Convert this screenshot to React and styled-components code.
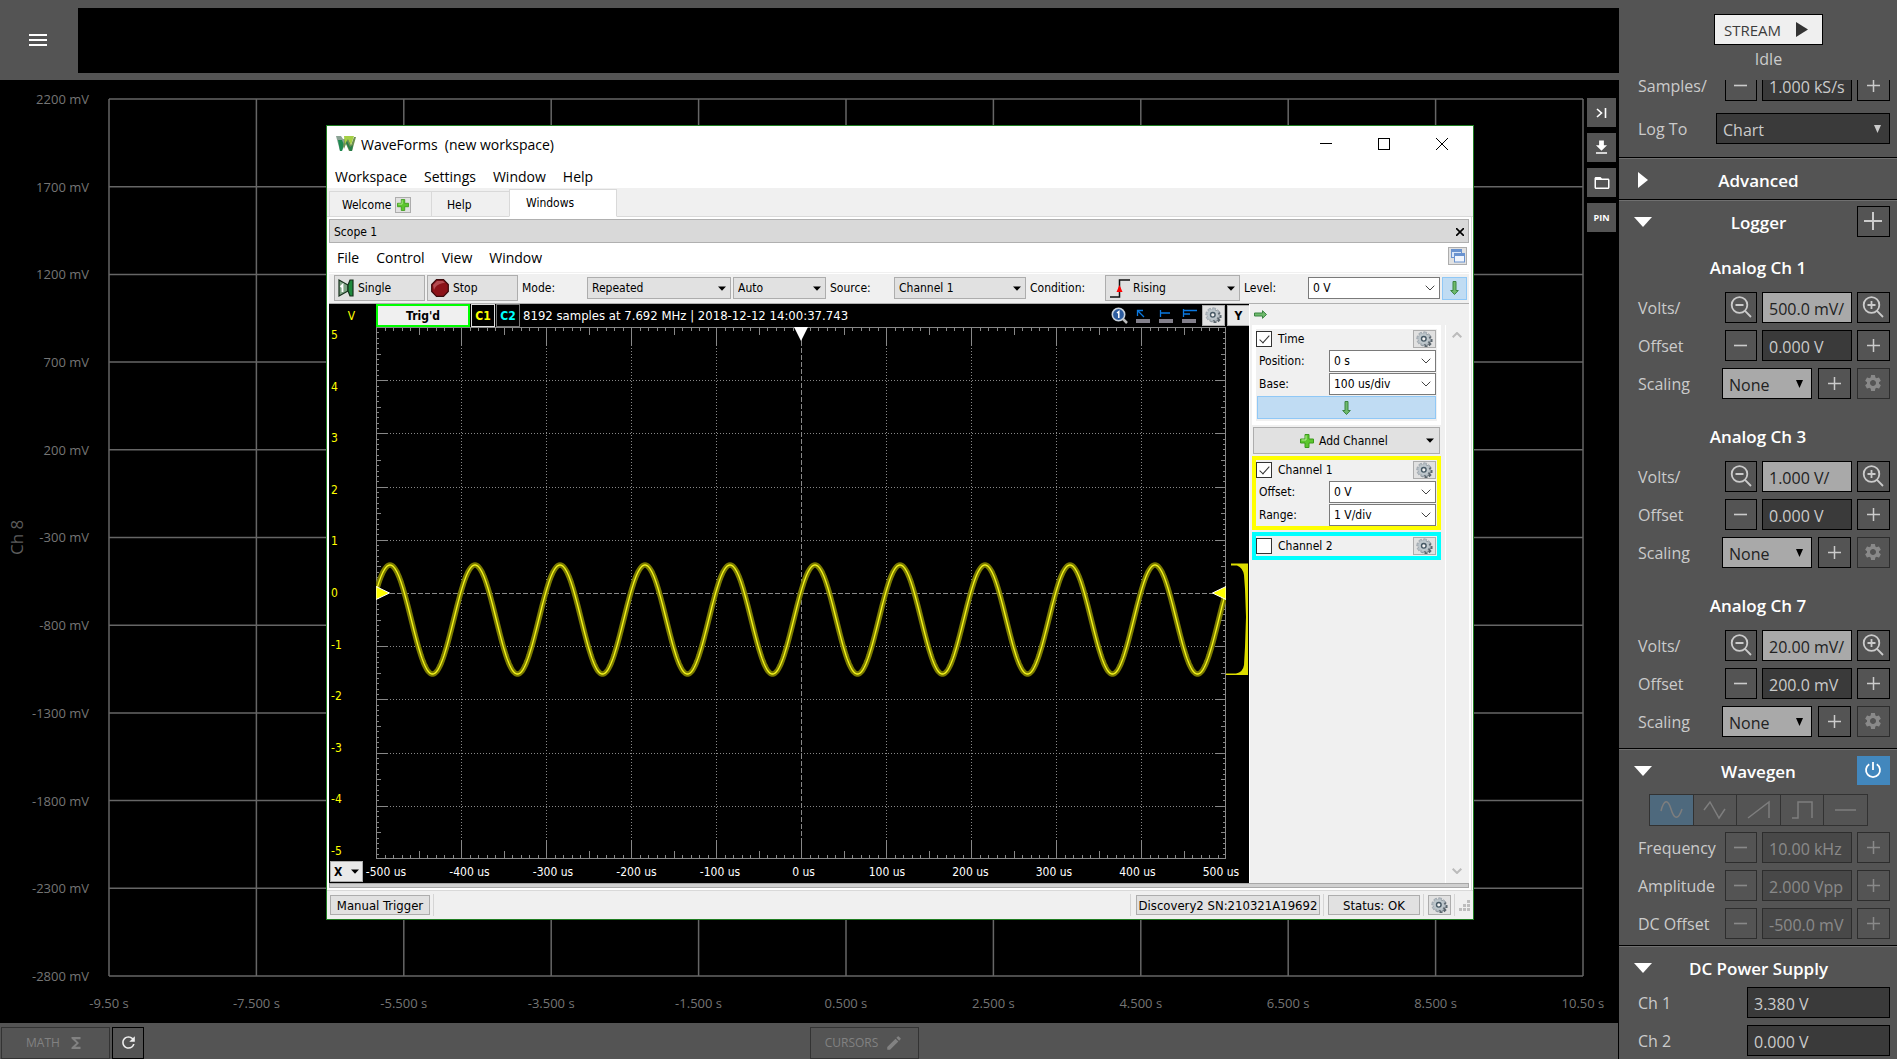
import React from "react";
import styled, { createGlobalStyle, css } from "styled-components";
import { MdMenu, MdFileDownload, MdFolderOpen, MdSettings, MdRefresh, MdEdit, MdFunctions } from "react-icons/md";

const ui = '"Open Sans", "Noto Sans", sans-serif';
const tahoma = '"DejaVu Sans Condensed", "DejaVu Sans", sans-serif';

const Global = createGlobalStyle`
  *, *::before, *::after { box-sizing: border-box; }
  body { margin: 0; background: #000; overflow: hidden; }
  button, input, select { font: inherit; color: inherit; margin: 0; }
  svg { display: block; flex: none; }
`;

/* ---------- Application frame ---------- */

const Shell = styled.div`
  display: grid;
  grid-template-columns: minmax(0, 1fr) 278px;
  height: 100vh;
  font-family: ${ui};
  font-size: 16px;
  color: #cbcbcb;
  background: #000;
`;

const Main = styled.main`
  display: flex;
  flex-direction: column;
  min-width: 0;
`;

const TopBar = styled.header`
  display: flex;
  height: 80px;
  flex: none;
  padding: 8px 0 7px;
  background: #545454;
`;

const MenuButton = styled.button`
  width: 78px;
  padding: 0 0 2px 26px;
  border: 0;
  background: none;
  color: #fff;
`;

const Timeline = styled.div`
  flex: 1;
  background: #000;
`;

const ChartArea = styled.section`
  position: relative;
  flex: 1;
  min-height: 0;
  display: grid;
  grid-template-columns: 32px 57px minmax(0, 1fr) 36px;
  grid-template-rows: minmax(0, 1fr) 47px;
  padding-top: 19px;
  font-size: 13px;
  color: #757575;
`;

const ChannelName = styled.div`
  display: flex;
  align-items: center;
  justify-content: center;
  writing-mode: vertical-rl;
  transform: rotate(180deg);
  font-size: 17px;
  color: #5c5c5c;
`;

const YLabels = styled.div`
  display: flex;
  flex-direction: column;
  justify-content: space-between;
  text-align: right;
  line-height: 18px;
  margin: -9px 0;
  white-space: nowrap;
`;

const PlotCell = styled.div`
  margin-left: 20px;
  min-height: 0;
`;

const XLabels = styled.div`
  grid-column: 3;
  display: flex;
  justify-content: space-between;
  margin-left: 20px;
  padding-top: 18px;
  line-height: 18px;
`;

const XLabel = styled.span`
  display: flex;
  justify-content: center;
  width: 0;
  white-space: pre;
`;

const Tools = styled.div`
  grid-column: 4;
  grid-row: 1;
  display: flex;
  flex-direction: column;
  align-items: flex-start;
  gap: 6px;
  padding-left: 4px;
  margin-top: -1px;
`;

const ToolButton = styled.button`
  width: 29px;
  height: 29px;
  padding: 0;
  border: 0;
  display: flex;
  align-items: center;
  justify-content: center;
  background: #545454;
  color: #fff;
  font-size: 9px;
  font-weight: 700;
`;

const BottomBar = styled.footer`
  display: grid;
  grid-template-columns: 1fr 1fr;
  align-items: center;
  height: 36px;
  flex: none;
  padding: 3px 0 0 1px;
  background: #545454;
  border-right: 1px solid #000;
`;

const ButtonPair = styled.div`
  display: flex;
  gap: 2px;
`;

const BarButton = styled.button`
  display: flex;
  align-items: center;
  justify-content: center;
  gap: 7px;
  width: ${(p) => p.$w || 109}px;
  height: 32px;
  padding: 0;
  border: 1px solid ${(p) => (p.disabled ? "#333" : "#000")};
  background: none;
  font-size: 12px;
  color: ${(p) => (p.disabled ? "#828282" : "#eee")};
`;

/* ---------- Sidebar ---------- */

const Side = styled.aside`
  display: flex;
  flex-direction: column;
  min-height: 0;
  background: #545454;
`;

const RunBox = styled.div`
  display: flex;
  flex-direction: column;
  align-items: center;
  height: 80px;
  flex: none;
  padding: 14px 0 0 21px;
  line-height: 28px;
`;

const StreamButton = styled.button`
  display: flex;
  align-items: center;
  justify-content: space-between;
  width: 109px;
  height: 31px;
  flex: none;
  padding: 0 14px 0 9px;
  border: 1px solid #000;
  background: #efefef;
  color: #3c3c3c;
  font-size: 15px;
`;

const SideScroll = styled.div`
  flex: 1;
  min-height: 0;
  overflow: hidden;
`;

const Section = styled.section`
  border-top: 1px solid #000;
  box-shadow: inset 0 1px #707070;
  padding: 1px 7px ${(p) => p.$pb || 0}px 19px;
`;

const TopSection = styled.section`
  display: flex;
  flex-direction: column;
  gap: 12px;
  margin-top: -10px;
  padding: 0 7px 13px 19px;
`;

const SectionHead = styled.div`
  display: grid;
  grid-template-columns: 33px 1fr 33px;
  align-items: center;
  height: 40px;
  margin-left: -4px;
  h2 {
    margin: 0;
    padding: 2px 7px 0 0;
    text-align: center;
    font-size: 17px;
    font-weight: 600;
    color: #fff;
  }
`;

const Toggle = styled.button`
  width: 20px;
  height: 24px;
  padding: 1px 0 0;
  border: 0;
  background: none;
  color: #fff;
`;

const Channel = styled.div`
  h3 {
    margin: 0 0 12px;
    padding-right: 12px;
    line-height: 24px;
    text-align: center;
    font-size: 17px;
    font-weight: 600;
    color: #fff;
  }
  padding-top: ${(p) => (p.$first ? 15 : 26)}px;
`;

const Rows = styled.div`
  display: flex;
  flex-direction: column;
  gap: 7px;
`;

const Row = styled.div`
  display: grid;
  grid-template-columns: ${(p) => p.$cols || "1fr 32px 90px 33px"};
  column-gap: ${(p) => p.$gap || 5}px;
  align-items: center;
  height: 31px;
  white-space: nowrap;
`;

const dim = css`
  &:disabled { opacity: 0.45; }
`;

const SideButton = styled.button`
  display: flex;
  align-items: center;
  justify-content: center;
  height: ${(p) => (p.$on ? 29 : 31)}px;
  padding: 0 1px 1px 0;
  border: ${(p) => (p.$on ? "0" : "1px solid #000")};
  background: ${(p) => (p.$on ? "#4287bd" : "none")};
  color: ${(p) => (p.$on ? "#fff" : "#cbcbcb")};
  ${dim}
`;

const Field = styled.input`
  width: 100%;
  min-width: 0;
  height: 31px;
  padding: 2px 0 0 6px;
  border: 1px solid #000;
  border-radius: 0;
  background: ${(p) => (p.$light ? "#a9a9a9" : "#3a3a3a")};
  color: ${(p) => (p.$light ? "#222" : "#cbcbcb")};
  outline: 0;
  ${dim}
`;

const SelectBox = styled.span`
  display: grid;
  align-items: center;
  select, svg { grid-area: 1 / 1; }
  svg { justify-self: end; margin-right: 9px; pointer-events: none; }
`;

const SideSelect = styled.select`
  appearance: none;
  width: 100%;
  height: 31px;
  padding: 2px 0 0 6px;
  border: 1px solid #000;
  border-radius: 0;
  background: ${(p) => (p.$light ? "#a9a9a9" : "#3a3a3a")};
  color: ${(p) => (p.$light ? "#222" : "#cbcbcb")};
`;

const WaveGroup = styled.div`
  display: flex;
  width: 219px;
  margin: 4px 0 6px 11px;
  opacity: 0.5;
`;

const WaveButton = styled.button`
  display: flex;
  align-items: center;
  justify-content: center;
  flex: 1;
  height: 32px;
  padding: 0;
  border: 1px solid #111;
  border-left-width: ${(p) => (p.$on ? 1 : 0)}px;
  background: ${(p) => (p.$on ? "#4a7ea6" : "none")};
  color: #a8a8a8;
`;

/* ---------- WaveForms window ---------- */

const Win = styled.section`
  position: absolute;
  left: 326px;
  top: 45px;
  width: 1148px;
  height: 795px;
  display: flex;
  flex-direction: column;
  border: 1px solid #1f7d22;
  background: #fff;
  font-family: ${tahoma};
  font-size: 12px;
  color: #000;
`;

const TitleBar = styled.div`
  display: flex;
  align-items: center;
  height: 38px;
  padding: 0 25px 2px 9px;
  white-space: pre;
  h1 {
    flex: 1;
    margin: 0 0 0 5px;
    font-family: ${ui};
    font-size: 14px;
    font-weight: 400;
  }
`;

const CaptionButtons = styled.div`
  display: flex;
  gap: 46px;
`;

const PlainButton = styled.button`
  padding: 0;
  border: 0;
  background: none;
`;

const MenuBar = styled.nav`
  display: flex;
  align-items: center;
  gap: 17px;
  height: ${(p) => p.$h}px;
  padding: 0 2px 0 8px;
  font-family: ${ui};
  font-size: 14px;
  a { color: #000; text-decoration: none; }
  button { margin: 0 0 3px auto; }
`;

const Tabs = styled.div`
  display: flex;
  align-items: flex-end;
  height: 29px;
  padding-left: 2px;
  background: #f0f0f0;
  box-shadow: inset 0 -1px #d9d9d9;
`;

const Tab = styled.button`
  display: flex;
  align-items: center;
  gap: 4px;
  width: ${(p) => p.$w}px;
  height: ${(p) => (p.$active ? 28 : 26)}px;
  padding: ${(p) => (p.$active ? 0 : 1)}px 0 0 ${(p) => p.$x}px;
  border: 1px solid #d9d9d9;
  border-bottom-color: ${(p) => (p.$active ? "#fff" : "#d9d9d9")};
  border-right-width: ${(p) => (p.$active ? 1 : 0)}px;
  background: ${(p) => (p.$active ? "#fff" : "#f0f0f0")};
`;

const IconTile = styled.span`
  display: flex;
  align-items: center;
  justify-content: center;
  width: 16px;
  height: 16px;
  border: 1px solid #adadad;
  background: #e1e1e1;
`;

const Pane = styled.div`
  flex: 1;
  min-height: 0;
  display: flex;
  flex-direction: column;
  margin-right: 1px;
  padding: 2px 2px 2px 2px;
  border-right: 1px solid #d9d9d9;
`;

const DockTitle = styled.div`
  display: flex;
  align-items: center;
  justify-content: space-between;
  height: 24px;
  flex: none;
  padding: 1px 4px 0;
  border: 1px solid #b0b0b0;
  background: #d9d9d9;
`;

const WinButton = styled.button`
  display: flex;
  align-items: center;
  justify-content: ${(p) => (p.$left ? "flex-start" : "center")};
  gap: 4px;
  width: ${(p) => p.$w}px;
  height: ${(p) => p.$h}px;
  flex: none;
  padding: 0 0 0 ${(p) => (p.$left ? 3 : 0)}px;
  border: 1px solid ${(p) => (p.$blue ? "#90c8f6" : "#adadad")};
  background: ${(p) => (p.$blue ? "#c0dcf3" : "#e1e1e1")};
`;

const ToolBar = styled.div`
  display: flex;
  align-items: center;
  gap: 2px;
  height: 32px;
  flex: none;
  padding: 0 0 0 5px;
  border-top: 1px solid #f0f0f0;
  border-bottom: 1px solid #b0b0b0;
  background: #f0f0f0;
  box-shadow: inset 0 1px #fff;
`;

const ToolLabel = styled.label`
  width: ${(p) => p.$w}px;
  padding-left: 2px;
`;

const WinSelectBox = styled.span`
  display: grid;
  align-items: center;
  width: ${(p) => p.$w}px;
  select, svg { grid-area: 1 / 1; }
  .caret { justify-self: end; margin-right: 5px; pointer-events: none; }
  .lead { justify-self: start; margin-left: 5px; pointer-events: none; }
`;

const WinSelect = styled.select`
  appearance: none;
  width: 100%;
  height: ${(p) => p.$h || 22}px;
  padding: 0 0 0 ${(p) => p.$x || 4}px;
  border: 1px solid ${(p) => (p.$combo ? "#7a7a7a" : "#adadad")};
  border-radius: 0;
  background: ${(p) => (p.$combo ? "#fff" : "#e1e1e1")};
`;

const ScopeBody = styled.div`
  flex: 1;
  min-height: 0;
  display: grid;
  grid-template-columns: minmax(0, 1fr) 220px;
`;

const Scope = styled.div`
  display: grid;
  grid-template-columns: 47px minmax(0, 1fr) 23px;
  grid-template-rows: 23px minmax(0, 1fr) 24px;
  background: #000;
  color: #fff;
`;

const VLabel = styled.div`
  padding-right: 2px;
  text-align: center;
  line-height: 24px;
  color: #ff0;
`;

const ScopeHead = styled.div`
  grid-column: 2 / 4;
  display: flex;
  align-items: center;
  min-width: 0;
  white-space: pre;
`;

const Trig = styled.button`
  width: 94px;
  height: 23px;
  padding: 0;
  border: 2px solid #0f0;
  background: #f0f0f0;
  color: #000;
  font-weight: 700;
`;

const ChannelTag = styled.button`
  width: 24px;
  height: 23px;
  margin-left: 1px;
  padding: 0;
  border: 1px solid ${(p) => (p.$c === "#ff0" ? "#ddd" : "#777")};
  background: #000;
  color: ${(p) => p.$c};
  font-weight: 700;
`;

const SampleInfo = styled.span`
  flex: 1;
  padding-left: 3px;
  font-size: 13px;
`;

const ViewIcons = styled.div`
  display: flex;
  align-items: center;
  gap: 7px;
  padding-right: 5px;
`;

const AxisButton = styled.button`
  width: 22px;
  height: 21px;
  margin-left: 2px;
  padding: 0;
  border: 1px solid #adadad;
  border-right: 0;
  background: #e9e9e9;
  color: #000;
  font-weight: 700;
`;

const ScopeY = styled.div`
  display: flex;
  flex-direction: column;
  justify-content: space-between;
  padding-left: 2px;
  line-height: 16px;
  color: #ff0;
`;

const ScopeFoot = styled.div`
  grid-column: 1 / 4;
  display: flex;
  align-items: center;
  padding: 1px 28px 0 1px;
`;

const XButton = styled.button`
  display: flex;
  align-items: center;
  justify-content: space-between;
  width: 33px;
  height: 21px;
  margin-right: 23px;
  flex: none;
  padding: 0 3px;
  border: 1px solid #adadad;
  background: #e9e9e9;
  color: #000;
  font-weight: 700;
`;

const ScopeX = styled.div`
  flex: 1;
  display: flex;
  justify-content: space-between;
`;

const Panel = styled.div`
  display: flex;
  flex-direction: column;
  border-left: 1px solid #fff;
  background: #f0f0f0;
`;

const PanelTop = styled.div`
  display: flex;
  align-items: center;
  height: 21px;
  padding-left: 4px;
`;

const PanelScroll = styled.div`
  flex: 1;
  display: grid;
  grid-template-columns: 194px 1fr;
  padding-left: 2px;
`;

const PanelList = styled.div`
  display: flex;
  flex-direction: column;
  gap: 2px;
  padding-right: 4px;
  border-right: 1px solid #fff;
`;

const Group = styled.fieldset`
  display: flex;
  flex-direction: column;
  gap: 1px;
  min-width: 0;
  margin: 0;
  padding: 0 1px ${(p) => p.$pb || 0}px 0;
  border: 4px solid ${(p) => p.$c};
`;

const GroupHead = styled.div`
  display: flex;
  align-items: center;
  height: 20px;
  label { flex: 1; padding-left: 6px; }
`;

const Check = styled.input`
  appearance: none;
  width: 16px;
  height: 16px;
  border: 1px solid #333;
  background: #fff;
  display: grid;
  place-items: center;
  &:checked::after {
    content: "";
    width: 5px;
    height: 10px;
    margin-top: -3px;
    border: solid #333;
    border-width: 0 1px 1px 0;
    transform: rotate(42deg);
  }
`;

const GroupRow = styled.div`
  display: grid;
  grid-template-columns: 70px 107px;
  align-items: center;
  padding-left: 3px;
`;

const BlueBar = styled.button`
  display: flex;
  align-items: center;
  justify-content: center;
  height: 23px;
  margin-left: 1px;
  padding: 0;
  border: 1px solid #90c8f6;
  background: #c0dcf3;
`;

const AddChannel = styled.button`
  display: flex;
  align-items: center;
  height: 27px;
  margin: 0 1px;
  padding: 0 5px 0 46px;
  gap: 5px;
  border: 1px solid #adadad;
  background: #e1e1e1;
  span { flex: 1; text-align: left; }
`;

const ScrollTrack = styled.div`
  display: flex;
  flex-direction: column;
  justify-content: space-between;
  align-items: center;
  padding: 7px 2px 9px 0;
`;

const Splitter = styled.div`
  height: 5px;
  flex: none;
  border: 1px solid #a8a8a8;
  background: #d0d0d0;
`;

const StatusBar = styled.footer`
  display: flex;
  align-items: center;
  gap: 5px;
  height: 29px;
  padding: 0 3px 0 3px;
  border-top: 1px solid #d9d9d9;
  background: #f0f0f0;
  font-size: 13px;
`;

const StatusFill = styled.div`
  flex: 1;
  height: 22px;
  margin-left: -2px;
  border: solid #d5d5d5;
  border-width: 0 1px;
`;

const Divider = styled.span`
  width: 1px;
  height: 22px;
  margin: 0 -1px 0 -2px;
  background: #d5d5d5;
`;

/* ---------- Icons ---------- */

const PlusIcon = ({ s = 13, w = 1.5 }) => (
  <svg width={s} height={s} viewBox="0 0 20 20" stroke="currentColor" strokeWidth={(w * 20) / s}><path d="M10 0V20M0 10H20" /></svg>
);
const MinusIcon = () => (
  <svg width="13" height="13" viewBox="0 0 13 13" stroke="currentColor" strokeWidth="1.6"><path d="M0 6.5H13" /></svg>
);
const ZoomIcon = ({ plus }) => (
  <svg width="22" height="22" viewBox="0 0 22 22" fill="none" stroke="currentColor" strokeWidth="1.8">
    <circle cx="9.5" cy="9" r="7.8" /><path d={`M15 14.8L21 21M5.5 9H13.5${plus ? "M9.5 5V13" : ""}`} />
  </svg>
);
const PowerIcon = () => (
  <svg width="18" height="18" viewBox="0 0 18 18" fill="none" stroke="currentColor" strokeWidth="1.8">
    <path d="M5.2 3.2A7 7 0 1 0 12.8 3.2M9 1V9" />
  </svg>
);
const Tri = ({ open }) => (
  <svg width="18" height="18" viewBox="0 0 18 18" fill="currentColor"><path d={open ? "M0 4H18L9 14Z" : "M4 1V17L14 9Z"} /></svg>
);
const SmallTri = ({ c }) => (
  <svg width="7" height="8" viewBox="0 0 7 8" fill={c}><path d="M0 0H7L3.5 8Z" /></svg>
);
const Caret = () => (
  <svg className="caret" width="8" height="5" viewBox="0 0 8 5"><path d="M0 .5H8L4 4.8Z" fill="#000" /></svg>
);
const Chevron = ({ up, c = "#444", w = 1 }) => (
  <svg className="caret" width="10" height="6" viewBox="0 0 10 6" fill="none" stroke={c} strokeWidth={w}><path d={up ? "M.7 5.3L5 1L9.3 5.3" : "M.7 .7L5 5L9.3 .7"} /></svg>
);
const GreenPlus = ({ s = 12 }) => (
  <svg width={s} height={s} viewBox="0 0 14 14">
    <path d="M5 .5H9V5H13.5V9H9V13.5H5V9H.5V5H5Z" fill="#5cc62e" stroke="#3c9a1c" />
    <path d="M6 1.5V6H1.5" fill="none" stroke="#b5ec95" />
  </svg>
);
const GreenArrow = ({ right }) => (
  <svg width={right ? 13 : 9} height={right ? 9 : 14} viewBox={right ? "0 0 13 9" : "0 0 9 14"}>
    <path d={right ? "M.5 3V6H8.5V8.3L12.5 4.5L8.5 .7V3Z" : "M3 .5H6V9.5H8.3L4.5 13.5L.7 9.5H3Z"} fill="#6fba6c" stroke="#3b8442" />
  </svg>
);
const Gear = () => (
  <svg width="17" height="17" viewBox="0 0 17 17">
    <g transform="translate(10 9.5)">
      {[0, 45, 90, 135].map((a) => <rect key={a} x="-1.5" y="-6.5" width="3" height="13" fill="#59646c" transform={`rotate(${a})`} />)}
      <circle r="4.8" fill="#59646c" />
    </g>
    <g transform="translate(7.8 7.8)">
      {[0, 45, 90, 135].map((a) => <rect key={a} x="-1.5" y="-7" width="3" height="14" fill="#b4bdc3" stroke="#87919a" strokeWidth=".5" transform={`rotate(${a + 12})`} />)}
      <circle r="5.2" fill="#bec7cc" />
      <circle r="2.3" fill="#f2f2f2" stroke="#465864" strokeWidth="1.4" />
    </g>
  </svg>
);
const Logo = () => (
  <svg width="20" height="16" viewBox="0 0 20 16">
    <path d="M0 0H5L7 3H10L8 8L6 15H4Z" fill="#8aa394" />
    <path d="M2 4H6L8 9L6 15H4Z" fill="#1d8a51" />
    <path d="M9 1H12L15 9L18 1H20L16 15H13L10 8L8 13L7 10Z" fill="#6d8f52" />
    <path d="M8 0H18L15 9L12 3L9 8Z" fill="#a4cf45" />
    <path d="M10 7L14 15H16L17 9L14 11L11 5Z" fill="#287d49" />
  </svg>
);
const SingleIcon = () => (
  <svg width="16" height="18" viewBox="0 0 16 18" stroke="#16301c" strokeWidth="1.2">
    <path d="M1 1L10 6V12L1 17Z" fill="#7fa486" /><path d="M10 6L12 1H15V17H12L10 12Z" fill="#1f8a3d" />
    <path d="M2.5 8L4.500 6V13" fill="none" stroke="#fff" strokeWidth="1.8" />
  </svg>
);
const StopIcon = () => (
  <svg width="18" height="18" viewBox="0 0 18 18">
    <path d="M5.5 .7H12.5L17.3 5.5V12.5L12.5 17.3H5.5L.7 12.5V5.5Z" fill="#8c1218" stroke="#3a0a0c" strokeWidth="1.2" />
    <path d="M6 2H12L14 4C9 4 5 6 3 11L2 6Z" fill="#c4656a" opacity=".7" />
  </svg>
);
const RisingIcon = () => (
  <svg className="lead" width="20" height="19" viewBox="0 0 20 19"><path d="M0 18H9.5V1H20" fill="none" stroke="#111" strokeWidth="1.5" /><path d="M9.500 6L12.500 13H6.500Z" fill="#f00" /></svg>
);
const WindowsIcon = () => (
  <svg width="14" height="14" viewBox="0 0 14 14" stroke="#6a93cf"><rect x=".5" y=".5" width="10" height="8" fill="#d9e6f8" /><path d="M1 2H10" strokeWidth="2" /><rect x="3.5" y="4.5" width="10" height="8.5" fill="#f0f5fd" /><path d="M4 6H13" strokeWidth="2" /></svg>
);
const LensIcon = () => (
  <svg width="17" height="17" viewBox="0 0 17 17"><path d="M12 12L16 16" stroke="#bbb" strokeWidth="2.5" /><circle cx="7.5" cy="7.500" r="6.2" fill="#2c5c9f" stroke="#c8d2dc" strokeWidth="1.6" /><path d="M6 6L7.8 4.600V11" fill="none" stroke="#fff" strokeWidth="1.5" /></svg>
);
const CursorIcon = ({ d }) => (
  <svg width="16" height="14" viewBox="0 0 16 14"><rect x="1" y="10" width="14" height="4" fill="#83808b" /><path d={d} stroke="#0a78e0" strokeWidth="1.3" fill="none" /></svg>
);
const Grip = () => (
  <svg width="11" height="11" viewBox="0 0 11 11" fill="#bdbdbd"><path d="M8 0h3v3h-3zM4 4h3v3h-3zM8 4h3v3h-3zM0 8h3v3h-3zM4 8h3v3h-3zM8 8h3v3h-3z" /></svg>
);

/* ---------- Charts ---------- */

const range = (n) => Array.from({ length: n }, (_, i) => i);

function LoggerGrid() {
  return (
    <svg width="100%" height="100%" overflow="visible" stroke="#666" strokeWidth="1.5">
      {range(11).map((i) => (
        <React.Fragment key={i}>
          <line x1={`${i * 10}%`} x2={`${i * 10}%`} y1="0" y2="100%" />
          <line y1={`${i * 10}%`} y2={`${i * 10}%`} x1="0" x2="100%" />
        </React.Fragment>
      ))}
    </svg>
  );
}

const W = 850;
const H = 532;

const wave = range(W + 1)
  .map((x) => `${x ? "L" : "M"}${x} ${(292.5 - 54.5 * Math.cos(((x - 14) / 85) * 2 * Math.PI)).toFixed(1)}`)
  .join("");

function ScopePlot() {
  const ticksX = range(101).map((i) => {
    const x = Math.round(i * 8.5) + 0.5;
    const l = i % 10 === 0 ? 18 : i % 5 === 0 ? 8 : 4;
    return `M${x} 0V${l}M${x} ${H}V${H - l}`;
  }).join("");
  const ticksY = range(101).map((i) => {
    const y = Math.round(i * 5.32) + 0.5;
    const l = i % 10 === 0 ? 11 : i % 5 === 0 ? 5 : 3;
    return `M0 ${y}H${l}M${W} ${y}H${W - l}`;
  }).join("");
  const dots = [1, 2, 3, 4, 6, 7, 8, 9]
    .map((i) => `M${i * 85 + 0.5} 18V${H - 18}M11 ${Math.round(i * 53.2) + 0.5}H${W - 11}`)
    .join("");
  return (
    <svg width="100%" height="100%" viewBox={`0 0 ${W} ${H}`} preserveAspectRatio="none" fill="none">
      <g stroke="#888">
        <path d={ticksX} />
        <path d={ticksY} />
        <rect x=".5" y=".5" width={W - 1} height={H - 1} />
        <path strokeDasharray="1 2" d={dots} />
        <path strokeDasharray="5 2" d={`M425.5 0V${H}M0 266.5H${W}`} />
      </g>
      <path d={wave} stroke="#7a7a00" strokeWidth="5.5" />
      <path d={wave} stroke="#f4f41a" strokeWidth="1.3" />
      <path d="M0 259.5L13.5 266L0 272.5Z M850 259.5L836.5 266L850 272.5Z" fill="#ff0" stroke="#fff" />
      <path d="M418 0H432L425 14Z" fill="#fff" />
    </svg>
  );
}

function Histogram() {
  return (
    <svg width="23" height="100%" viewBox="0 0 23 532" preserveAspectRatio="none" fill="#dede00">
      <path d="M5 236.5H22V348H0V346.5H10Q17 345 18 338L19 320L20 290L19 262L18 248Q17 241 11 238.5H5Z" />
    </svg>
  );
}

/* ---------- Composite controls ---------- */

function Stepper({ label, value, light, zoom, disabled }) {
  const id = React.useId();
  return (
    <Row>
      <label htmlFor={id}>{label}</label>
      <SideButton aria-label={`Decrease ${label}`} disabled={disabled}>{zoom ? <ZoomIcon /> : <MinusIcon />}</SideButton>
      <Field id={id} defaultValue={value} $light={light} disabled={disabled} />
      <SideButton aria-label={`Increase ${label}`} disabled={disabled}>{zoom ? <ZoomIcon plus /> : <PlusIcon />}</SideButton>
    </Row>
  );
}

function Scaling() {
  const id = React.useId();
  return (
    <Row $cols="1fr 90px 33px 33px" $gap={6}>
      <label htmlFor={id}>Scaling</label>
      <SelectBox>
        <SideSelect id={id} $light><option>None</option></SideSelect>
        <SmallTri c="#000" />
      </SelectBox>
      <SideButton aria-label="Add scaling"><PlusIcon /></SideButton>
      <SideButton aria-label="Scaling settings" disabled><MdSettings size={20} /></SideButton>
    </Row>
  );
}

function AnalogChannel({ name, volts, offset, first }) {
  return (
    <Channel $first={first}>
      <h3>{name}</h3>
      <Rows>
        <Stepper label="Volts/" value={volts} light zoom />
        <Stepper label="Offset" value={offset} />
        <Scaling />
      </Rows>
    </Channel>
  );
}

function Head({ title, open, children }) {
  return (
    <SectionHead>
      <Toggle aria-label={`Toggle ${title}`}><Tri open={open} /></Toggle>
      <h2>{title}</h2>
      {children}
    </SectionHead>
  );
}

function Drop({ w, h, x, combo, icon, value, label, id }) {
  return (
    <WinSelectBox $w={w}>
      <WinSelect id={id} aria-label={label} $h={h} $x={x} $combo={combo}><option>{value}</option></WinSelect>
      {icon}
      {combo ? <Chevron /> : <Caret />}
    </WinSelectBox>
  );
}

function LabeledDrop({ label, value }) {
  const id = React.useId();
  return (
    <GroupRow>
      <label htmlFor={id}>{label}</label>
      <Drop w={107} id={id} combo value={value} />
    </GroupRow>
  );
}

function GroupTitle({ name, on }) {
  const id = React.useId();
  return (
    <GroupHead>
      <Check type="checkbox" id={id} defaultChecked={on} />
      <label htmlFor={id}>{name}</label>
      <WinButton $w={23} $h={18} aria-label={`${name} settings`}><Gear /></WinButton>
    </GroupHead>
  );
}

const waves = [
  ["Sine", "M1 11C4-1 8-1 11 9S18 21 22 9"],
  ["Triangle", "M1 10L7 2L16 18L22 9"],
  ["Ramp", "M1 18L22 2V18"],
  ["Square", "M1 18H7V2H21V18"],
  ["DC", "M1 10H22"],
];

function WaveFormsWindow() {
  return (
    <Win aria-label="WaveForms">
      <TitleBar>
        <Logo />
        <h1>{"WaveForms  (new workspace)"}</h1>
        <CaptionButtons>
          <PlainButton aria-label="Minimize"><svg width="12" height="12" stroke="#000"><path d="M0 5.5H12" /></svg></PlainButton>
          <PlainButton aria-label="Maximize"><svg width="12" height="12" stroke="#000" fill="none"><rect x=".5" y=".5" width="11" height="11" /></svg></PlainButton>
          <PlainButton aria-label="Close"><svg width="12" height="12" stroke="#000"><path d="M0 0L12 12M12 0L0 12" /></svg></PlainButton>
        </CaptionButtons>
      </TitleBar>
      <MenuBar $h={24}>
        {["Workspace", "Settings", "Window", "Help"].map((t) => <a href="#" key={t}>{t}</a>)}
      </MenuBar>
      <Tabs>
        <Tab $w={102} $x={12}>Welcome<IconTile><GreenPlus /></IconTile></Tab>
        <Tab $w={78} $x={15}>Help</Tab>
        <Tab $w={108} $x={16} $active>Windows</Tab>
      </Tabs>
      <Pane>
        <DockTitle>
          Scope 1
          <PlainButton aria-label="Close scope"><svg width="8" height="8" stroke="#000" strokeWidth="1.6"><path d="M0 0L8 8M8 0L0 8" /></svg></PlainButton>
        </DockTitle>
        <MenuBar $h={29}>
          {["File", "Control", "View", "Window"].map((t) => <a href="#" key={t}>{t}</a>)}
          <WinButton $w={19} $h={18} aria-label="Undock"><WindowsIcon /></WinButton>
        </MenuBar>
        <ToolBar>
          <WinButton $w={91} $h={26} $left><SingleIcon />Single</WinButton>
          <WinButton $w={91} $h={26} $left><StopIcon />Stop</WinButton>
          <ToolLabel $w={65} htmlFor="mode">Mode:</ToolLabel>
          <Drop w={144} id="mode" value="Repeated" />
          <Drop w={93} label="Trigger mode" value="Auto" />
          <ToolLabel $w={64} htmlFor="source">Source:</ToolLabel>
          <Drop w={132} id="source" value="Channel 1" />
          <ToolLabel $w={75} htmlFor="cond">Condition:</ToolLabel>
          <Drop w={135} h={26} x={27} id="cond" value="Rising" icon={<RisingIcon />} />
          <ToolLabel $w={64} htmlFor="level">Level:</ToolLabel>
          <Drop w={132} id="level" combo value="0 V" />
          <WinButton $w={25} $h={23} $blue aria-label="Level options"><GreenArrow /></WinButton>
        </ToolBar>
        <ScopeBody>
          <Scope>
            <VLabel>V</VLabel>
            <ScopeHead>
              <Trig>Trig'd</Trig>
              <ChannelTag $c="#ff0">C1</ChannelTag>
              <ChannelTag $c="#0ff">C2</ChannelTag>
              <SampleInfo>8192 samples at 7.692 MHz | 2018-12-12 14:00:37.743</SampleInfo>
              <ViewIcons>
                <LensIcon />
                <CursorIcon d="M3 2L9 8M2.500 7V1.500H8" />
                <CursorIcon d="M2.500 1V8M2 4H12" />
                <CursorIcon d="M2.500 0V8M2 1.500H16M2 5H9" />
              </ViewIcons>
              <WinButton $w={23} $h={21} aria-label="View settings"><Gear /></WinButton>
              <AxisButton>Y</AxisButton>
            </ScopeHead>
            <ScopeY>{["5", "4", "3", "2", "1", "0", "-1", "-2", "-3", "-4", "-5"].map((t) => <span key={t}>{t}</span>)}</ScopeY>
            <ScopePlot />
            <Histogram />
            <ScopeFoot>
              <XButton aria-label="X axis">X<Caret /></XButton>
              <ScopeX>
                {[-500, -400, -300, -200, -100, 0, 100, 200, 300, 400, 500].map((t) => <XLabel key={t}>{`${t} us`}</XLabel>)}
              </ScopeX>
            </ScopeFoot>
          </Scope>
          <Panel>
            <PanelTop><GreenArrow right /></PanelTop>
            <PanelScroll>
              <PanelList>
                <Group $c="#fff" $pb={2}>
                  <GroupTitle name="Time" on />
                  <LabeledDrop label="Position:" value="0 s" />
                  <LabeledDrop label="Base:" value="100 us/div" />
                  <BlueBar aria-label="Time options"><GreenArrow /></BlueBar>
                </Group>
                <AddChannel><GreenPlus s={14} /><span>Add Channel</span><Caret /></AddChannel>
                <Group $c="#ff0">
                  <GroupTitle name="Channel 1" on />
                  <LabeledDrop label="Offset:" value="0 V" />
                  <LabeledDrop label="Range:" value="1 V/div" />
                </Group>
                <Group $c="#0ff">
                  <GroupTitle name="Channel 2" />
                </Group>
              </PanelList>
              <ScrollTrack><Chevron up c="#bbb" w={2} /><Chevron c="#bbb" w={2} /></ScrollTrack>
            </PanelScroll>
          </Panel>
        </ScopeBody>
        <Splitter />
      </Pane>
      <StatusBar>
        <WinButton $w={100} $h={20}>Manual Trigger</WinButton>
        <StatusFill />
        <WinButton $w={184} $h={20}>Discovery2 SN:210321A19692</WinButton>
        <Divider />
        <WinButton $w={92} $h={20}>Status: OK</WinButton>
        <Divider />
        <WinButton $w={23} $h={20} aria-label="Device settings"><Gear /></WinButton>
        <Divider />
        <Grip />
      </StatusBar>
    </Win>
  );
}

function Sidebar() {
  return (
    <Side>
      <RunBox>
        <StreamButton>STREAM<svg width="12" height="15" viewBox="0 0 12 15" fill="#333"><path d="M0 0L12 7.5L0 15Z" /></svg></StreamButton>
        Idle
      </RunBox>
      <SideScroll>
        <TopSection>
          <Stepper label="Samples/" value="1.000 kS/s" />
          <Row $cols="1fr 174px">
            <label htmlFor="log">Log To</label>
            <SelectBox>
              <SideSelect id="log"><option>Chart</option></SideSelect>
              <SmallTri c="#cbcbcb" />
            </SelectBox>
          </Row>
        </TopSection>
        <Section><Head title="Advanced" /></Section>
        <Section $pb={11}>
          <Head title="Logger" open><SideButton aria-label="Add channel"><PlusIcon s={18} w={2} /></SideButton></Head>
          <AnalogChannel first name="Analog Ch 1" volts="500.0 mV/" offset="0.000 V" />
          <AnalogChannel name="Analog Ch 3" volts="1.000 V/" offset="0.000 V" />
          <AnalogChannel name="Analog Ch 7" volts="20.00 mV/" offset="200.0 mV" />
        </Section>
        <Section $pb={6}>
          <Head title="Wavegen" open><SideButton $on aria-label="Wavegen power"><PowerIcon /></SideButton></Head>
          <WaveGroup>
            {waves.map(([n, d], i) => (
              <WaveButton key={n} aria-label={n} $on={i === 0} disabled>
                <svg width="23" height="20" viewBox="0 0 23 20" fill="none" stroke="currentColor" strokeWidth="1.5"><path d={d} /></svg>
              </WaveButton>
            ))}
          </WaveGroup>
          <Rows>
            <Stepper label="Frequency" value="10.00 kHz" disabled />
            <Stepper label="Amplitude" value="2.000 Vpp" disabled />
            <Stepper label="DC Offset" value="-500.0 mV" disabled />
          </Rows>
        </Section>
        <Section>
          <Head title="DC Power Supply" open />
          <Rows>
            <Row $cols="1fr 143px"><label htmlFor="dc1">Ch 1</label><Field id="dc1" defaultValue="3.380 V" /></Row>
            <Row $cols="1fr 143px"><label htmlFor="dc2">Ch 2</label><Field id="dc2" defaultValue="0.000 V" /></Row>
          </Rows>
        </Section>
      </SideScroll>
    </Side>
  );
}

const yTicks = [2200, 1700, 1200, 700, 200, -300, -800, -1300, -1800, -2300, -2800];
const xTicks = ["-9.50 s", "-7.500 s", "-5.500 s", "-3.500 s", "-1.500 s", "0.500 s", "2.500 s", "4.500 s", "6.500 s", "8.500 s", "10.50 s"];

export default function App() {
  return (
    <Shell>
      <Global />
      <Main>
        <TopBar>
          <MenuButton aria-label="Menu"><MdMenu size={24} /></MenuButton>
          <Timeline />
        </TopBar>
        <ChartArea>
          <ChannelName>Ch 8</ChannelName>
          <YLabels>{yTicks.map((t) => <span key={t}>{t} mV</span>)}</YLabels>
          <PlotCell><LoggerGrid /></PlotCell>
          <Tools>
            <ToolButton aria-label="Jump to end"><svg width="12" height="12" viewBox="0 0 12 12" fill="none" stroke="#fff" strokeWidth="1.6"><path d="M1 2L5.5 6L1 10M9.5 1V11" /></svg></ToolButton>
            <ToolButton aria-label="Download"><MdFileDownload size={19} /></ToolButton>
            <ToolButton aria-label="Open"><MdFolderOpen size={18} /></ToolButton>
            <ToolButton>PIN</ToolButton>
          </Tools>
          <XLabels>{xTicks.map((t) => <XLabel key={t}>{t}</XLabel>)}</XLabels>
          <WaveFormsWindow />
        </ChartArea>
        <BottomBar>
          <ButtonPair>
            <BarButton disabled>MATH<MdFunctions size={18} /></BarButton>
            <BarButton $w={32} aria-label="Refresh"><MdRefresh size={19} /></BarButton>
          </ButtonPair>
          <BarButton disabled>CURSORS<MdEdit size={18} /></BarButton>
        </BottomBar>
      </Main>
      <Sidebar />
    </Shell>
  );
}
